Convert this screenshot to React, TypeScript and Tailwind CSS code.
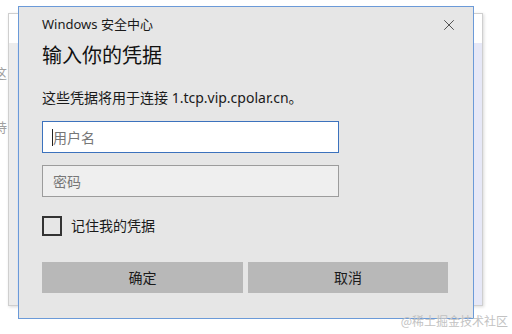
import { X } from 'lucide-react'

const font = { fontFamily: '"Noto Sans", "Noto Sans CJK SC", sans-serif' }

function BackgroundWindow() {
  return (
    <div className="absolute left-[8px] top-[13px] w-[475px] h-[293px] border border-[#cfcfcf] bg-[#ededf1] shadow-[1px_1px_3px_rgba(0,0,0,0.15)] flex flex-col">
      <div className="h-[29px] bg-white" />
      <div className="flex-1 flex justify-between">
        <div className="w-[9px] bg-[#ececec] border-r border-[#dfe6f3]" />
        <div className="w-[9px] bg-[#e6e8f7]" />
      </div>
    </div>
  )
}

function CredentialDialog() {
  return (
    <div className="absolute left-[18px] top-[6px] w-[456px] h-[313px] bg-[#e6e6e6] border border-[#6b9ad8] flex flex-col pl-[23px] pr-[24px]">
      <div className="flex items-center justify-between h-[34px] pt-[1px]">
        <span className="text-[13px] text-[#1a1a1a]">Windows 安全中心</span>
        <X className="w-[18px] h-[18px] text-[#333] -mr-[9px]" strokeWidth={1.1} />
      </div>
      <h1 className="text-[20px] leading-[28px] text-[#111] mt-[1px]">输入你的凭据</h1>
      <p className="text-[14px] leading-[20px] text-[#1a1a1a] mt-[18px]">
        这些凭据将用于连接 1.tcp.vip.cpolar.cn。
      </p>
      <div className="mt-[13px] w-[297px] h-[32px] bg-white border-[1.5px] border-[#3c72bd] flex items-center pl-[9px] text-[14px]">
        <span className="w-px h-[17px] bg-[#222]" />
        <span className="text-[#777]">用户名</span>
      </div>
      <div className="mt-[12px] w-[297px] h-[32px] bg-[#efefef] border border-[#9c9c9c] flex items-center pl-[10px] text-[14px] text-[#777]">
        密码
      </div>
      <label className="mt-[18px] flex items-center gap-[9px] text-[14px] text-[#1a1a1a]">
        <span className="w-[20px] h-[20px] border-2 border-[#333] bg-[#e6e6e6]" />
        记住我的凭据
      </label>
      <div className="mt-[26px] flex gap-[5px]">
        <button className="w-[201px] h-[31px] bg-[#b8b8b8] text-[14px] text-[#1a1a1a]">确定</button>
        <button className="w-[200px] h-[31px] bg-[#b8b8b8] text-[14px] text-[#1a1a1a]">取消</button>
      </div>
    </div>
  )
}

export default function App() {
  return (
    <div className="relative w-[512px] h-[334px] bg-white overflow-hidden" style={font}>
      <span className="absolute left-[-6px] top-[64px] text-[13px] text-[#a0a0a0]">这</span>
      <span className="absolute left-[-6px] top-[118px] text-[13px] text-[#a0a0a0]">持</span>
      <BackgroundWindow />
      <CredentialDialog />
      <span className="absolute right-[4px] bottom-[4px] text-[12px] text-[#c2c2c2]" style={{ fontFamily: '"Noto Sans CJK SC", serif' }}>
        @稀土掘金技术社区
      </span>
    </div>
  )
}
